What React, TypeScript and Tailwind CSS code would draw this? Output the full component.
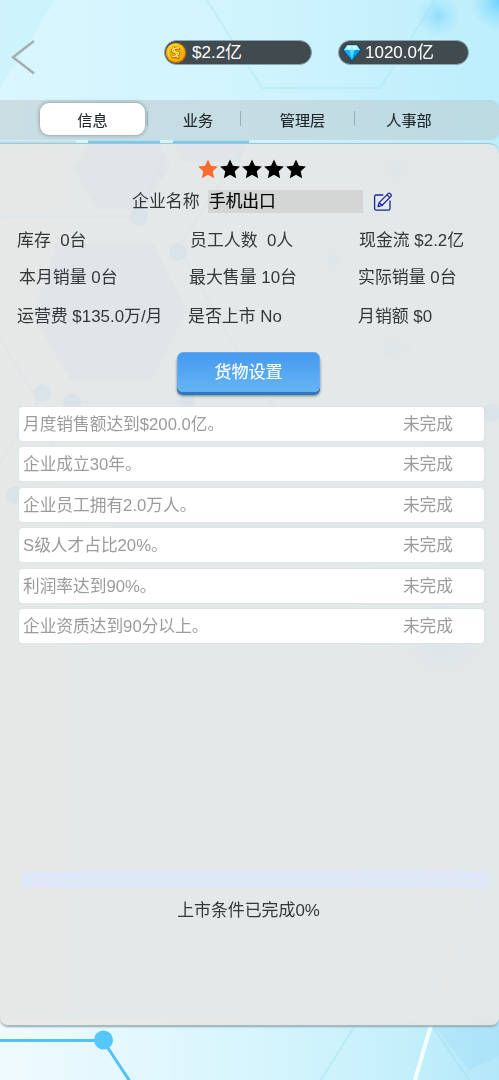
import React from "react";

const STAR = "M12 1.6l3.2 6.9 7.6.9-5.6 5.1 1.5 7.5L12 18.2 5.3 22l1.5-7.5L1.2 9.4l7.6-.9z";

const tabs = [
  { label: "业务", className: "w-[92px] pl-[8px]" },
  { label: "管理层", className: "w-[113px] pl-[10px]" },
  { label: "人事部", className: "w-[108px]" },
];

const stats = [
  {
    height: "h-9",
    cells: [
      { text: "库存  0台", className: "pl-[17px]" },
      { text: "员工人数  0人", className: "pl-[2px]" },
      { text: "现金流 $2.2亿", className: "pl-[2px]" },
    ],
  },
  {
    height: "h-[37px]",
    cells: [
      { text: "本月销量 0台", className: "pl-[19px]" },
      { text: "最大售量 10台", className: "pl-px" },
      { text: "实际销量 0台", className: "pl-px" },
    ],
  },
  {
    height: "h-[42px]",
    cells: [
      { text: "运营费 $135.0万/月", className: "pl-[17px]" },
      { text: "是否上市 No", className: "pl-0" },
      { text: "月销额 $0", className: "pl-px" },
    ],
  },
];

const goals = [
  "月度销售额达到$200.0亿。",
  "企业成立30年。",
  "企业员工拥有2.0万人。",
  "S级人才占比20%。",
  "利润率达到90%。",
  "企业资质达到90分以上。",
];

function Backdrop() {
  return (
    <svg className="absolute inset-0 -z-10" width="499" height="1080" viewBox="0 0 499 1080" fill="none">
      <defs>
        <linearGradient id="sky" x1="0" y1="0" x2="1" y2="0">
          <stop offset="0" stopColor="#daf6fe" />
          <stop offset="0.5" stopColor="#d0f4fd" />
          <stop offset="1" stopColor="#bceefb" />
        </linearGradient>
        <linearGradient id="floor" x1="0" y1="0" x2="1" y2="0">
          <stop offset="0" stopColor="#effaff" />
          <stop offset="0.45" stopColor="#daf6fd" />
          <stop offset="0.8" stopColor="#c5f0fb" />
          <stop offset="1" stopColor="#b3e7fa" />
        </linearGradient>
        <radialGradient id="glow">
          <stop offset="0" stopColor="#5ccbff" stopOpacity="0.8" />
          <stop offset="1" stopColor="#7dd6ff" stopOpacity="0" />
        </radialGradient>
      </defs>
      <rect width="499" height="1080" fill="url(#sky)" />
      <rect y="1020" width="499" height="60" fill="url(#floor)" />
      <path d="M0 0h55L0 88z" fill="#c2effb" opacity="0.5" />
      <path d="M207 0l55 88 118 0 55-88" stroke="#a9e3f5" strokeWidth="2" opacity="0.4" />
      <circle cx="438" cy="16" r="22" fill="url(#glow)" opacity="0.6" />
      <circle cx="499" cy="2" r="28" fill="url(#glow)" />
      <path d="M88 142h72M173 142h76" stroke="#7dcde8" strokeWidth="3" />
      <path d="M0 142h76" stroke="#bfe4ef" strokeWidth="3" />
      <g opacity="0.8">
        <path d="M88 142h72l11 25-30 42H96l-22-40zM173 142h76l-10 20h-56z" fill="#7cb8ff" opacity="0.5" />
        <path d="M56 243h97l34 66-35 71H70l-38-66z" fill="#7cb8ff" opacity="0.5" />
      </g>
      <path d="M0 217h134M166 153l-28 60M240 153l-60 92M183 255l62 110 30 42M0 464l38-63-52-85M72 402h116M43 464l29-62" stroke="#64b4ff" strokeWidth="2.5" opacity="0.4" />
      <g fill="#4cb4ff" opacity="0.6">
        <circle cx="139" cy="217" r="9" />
        <circle cx="178" cy="252" r="9" />
        <circle cx="42" cy="393" r="9" />
        <circle cx="72" cy="402" r="9" />
        <circle cx="188" cy="402" r="8" />
        <circle cx="15" cy="495" r="9" />
        <circle cx="491" cy="413" r="9" />
      </g>
      <circle cx="394" cy="170" r="18" fill="url(#glow)" opacity="0.4" />
      <circle cx="334" cy="260" r="17" fill="url(#glow)" opacity="0.4" />
      <circle cx="393" cy="347" r="20" fill="url(#glow)" opacity="0.35" />
      <circle cx="440" cy="637" r="50" fill="url(#glow)" opacity="0.45" />
      <path d="M354 1027l-33 53M433 1027l36 53" stroke="#9bdff0" strokeWidth="1.5" opacity="0.5" />
      <path d="M433 1025l66 0v31l-30 14z" fill="#9bdcfa" opacity="0.3" />
      <path d="M487 840l-56 185" stroke="#ffffff" strokeWidth="4" opacity="0.45" />
      <path d="M431 1025l-16 55" stroke="#f4ffff" strokeWidth="4" />
      <path d="M0 1040.500h103l27 41" stroke="#50c2f6" strokeWidth="3" />
      <circle cx="103.500" cy="1040" r="9.500" fill="#55c8fb" />
    </svg>
  );
}

function Coin() {
  return (
    <svg width="22" height="22" viewBox="0 0 22 22">
      <circle cx="11" cy="11" r="10.300" fill="#bd6907" />
      <circle cx="10.600" cy="10.500" r="9.500" fill="#f6ad08" />
      <circle cx="10.200" cy="10" r="8" fill="#ffd52d" />
      <circle cx="11" cy="11" r="7" fill="#edac0d" />
      <path d="M15 6.500l-2.500-.5-4 1.300c-2 .8-1.300 2.700.5 3l3 .3c2.200.4 1.800 2.300-.3 3.100l-3 1.300-2.300-.6M8 5l5.500 12" fill="none" stroke="#9c5d07" strokeWidth="2.600" />
      <path d="M14.500 6l-2-.3-4 1.300c-2 .8-1.300 2.700.5 3l3 .3c2.200.4 1.800 2.300-.3 3.100l-3 1.300-2-.6M8 5l5 11" fill="none" stroke="#ffe65b" strokeWidth="1.500" />
    </svg>
  );
}

function Diamond() {
  return (
    <svg width="20" height="18" viewBox="0 0 20 18">
      <path d="M4.500.8h11L19.300 6 10 17.300.7 6z" fill="#087acb" stroke="#123b52" strokeWidth="0.800" />
      <path d="M5 1.500h10L18 6H2z" fill="#9cf3ff" />
      <path d="M5 1.500l2 4.500 3-4.500L13 6l2-4.500" fill="#e2ffff" />
      <path d="M2 6h5l3 10z" fill="#18aaf0" />
      <path d="M7 6h6l-3 10z" fill="#42dcff" />
      <path d="M13 6h5l-8 10z" fill="#079be8" />
    </svg>
  );
}

function EditIcon() {
  return (
    <svg width="20" height="20" viewBox="0 0 20 20" fill="none" stroke="#1d24a3" strokeWidth="1.300" strokeLinejoin="round" strokeLinecap="round">
      <path d="M9.800 3H3.200Q1.600 3 1.600 4.600v12Q1.600 18.200 3.200 18.200h12.200Q17 18.200 17 16.600V9" />
      <path d="M5 14.700l1.200-4.100 8.900-9q1-.8 2 0l.8.8q.8 1 0 2L9 13.500zM14 2.800l2.800 2.800M6.200 10.600L9 13.500" />
    </svg>
  );
}

export default function App() {
  return (
    <main lang="zh-CN" className="relative isolate flex h-[1080px] w-[499px] flex-col overflow-hidden font-['Liberation_Sans','Noto_Sans_CJK_SC',sans-serif] text-[16.900px] text-[#34373a]">
      <Backdrop />

      <header className="flex h-[100px] items-start pt-10">
        <svg className="ml-[11px]" width="25" height="36" viewBox="0 0 25 36" fill="none">
          <path d="M23 1L2 17.300 23 33.500" stroke="#a6adb0" strokeWidth="2.500" />
        </svg>
        <div className="ml-32 flex h-[25px] w-[148px] items-center rounded-full border border-[#8aa8b0] bg-[#414b4f] text-[17px] whitespace-nowrap text-white">
          <Coin />
          <span className="ml-[5px]">$2.2亿</span>
        </div>
        <div className="ml-[26px] flex h-[25px] w-[131px] items-center rounded-full border border-[#8aa8b0] bg-[#414b4f] pl-[3px] text-[17px] whitespace-nowrap text-white">
          <Diamond />
          <span className="ml-[3px]">1020.0亿</span>
        </div>
      </header>

      <nav className="flex h-10 shrink-0 items-center rounded-r-lg bg-[#bac5ca]/50 text-[15.200px] text-[#1e2427] [-webkit-text-stroke:0.120px]">
        <button className="mb-[2px] ml-10 flex h-8 w-[105px] items-center justify-center rounded-[9px] bg-white pt-[5px] shadow-[0_0_4px_#7f898d]">信息</button>
        <div className="ml-[2px] flex items-center">
          {tabs.map((tab) => (
            <div key={tab.label} className="flex items-center">
              <i className="mb-[3px] h-[15px] w-px bg-[#9bafb6]" />
              <span className={`${tab.className} flex justify-center pt-[2px] whitespace-nowrap`}>{tab.label}</span>
            </div>
          ))}
        </div>
      </nav>

      <section className="mt-[3px] flex h-[883px] shrink-0 flex-col rounded-tr-[10px] rounded-b-[8px] border-t border-b border-t-[#a7c5ce] border-b-[#a4b9bf] bg-[#e7e6e5]/88 shadow-[0_1px_2px_#8fa9b0]">
        <div className="mt-[14px] ml-[197px] flex h-[22px]">
          {[0, 1, 2, 3, 4].map((n) => (
            <svg key={n} width="22" height="22" viewBox="0 0 24 24" className={n === 0 ? "fill-[#ff6a2e]" : "fill-black"}>
              <path d={STAR} />
            </svg>
          ))}
        </div>

        <div className="mt-[10px] flex h-[23px] items-center pl-[132px]">
          <span className="w-[76px] pt-px">企业名称</span>
          <span className="flex h-[23px] w-[155px] items-center bg-[#d4d6d6] pt-px pl-px text-[16.700px] text-black [-webkit-text-stroke:0.150px]">手机出口</span>
          <span className="ml-[10px]"><EditIcon /></span>
        </div>

        <div className="mt-[10px] flex flex-col">
          {stats.map((row) => (
            <div key={row.height} className={`grid grid-cols-[188px_169px_142px] items-center whitespace-pre ${row.height}`}>
              {row.cells.map((cell) => (
                <span key={cell.text} className={cell.className}>{cell.text}</span>
              ))}
            </div>
          ))}
        </div>

        <button className="mt-[14px] ml-[177px] flex h-[40px] w-[143px] shrink-0 items-center justify-center rounded-[6px] border border-[#65acf0] bg-linear-to-b from-[#4699ee] to-[#64b4f5] pt-[2px] text-[17px] text-white shadow-[0_3px_0_#2e78bd,0_4px_3px_#71808c] [-webkit-text-stroke:0.150px]">
          货物设置
        </button>

        <ul className="mt-[15px] mr-[15px] ml-[19px] flex flex-col gap-[6.400px] text-[16.700px] text-[#999b9c]">
          {goals.map((goal) => (
            <li key={goal} className="flex h-[34px] items-center justify-between rounded-[4px] bg-white pt-px pr-[31px] pl-[4px] shadow-[0_0_2px_#cddce2]">
              <span>{goal}</span>
              <span>未完成</span>
            </li>
          ))}
        </ul>

        <div className="mt-[228px] ml-[22px] h-[16px] w-[467px] shrink-0 bg-[#e0e7f9]" />
        <p className="mt-[11px] pr-[2px] text-center">上市条件已完成0%</p>
      </section>
    </main>
  );
}
